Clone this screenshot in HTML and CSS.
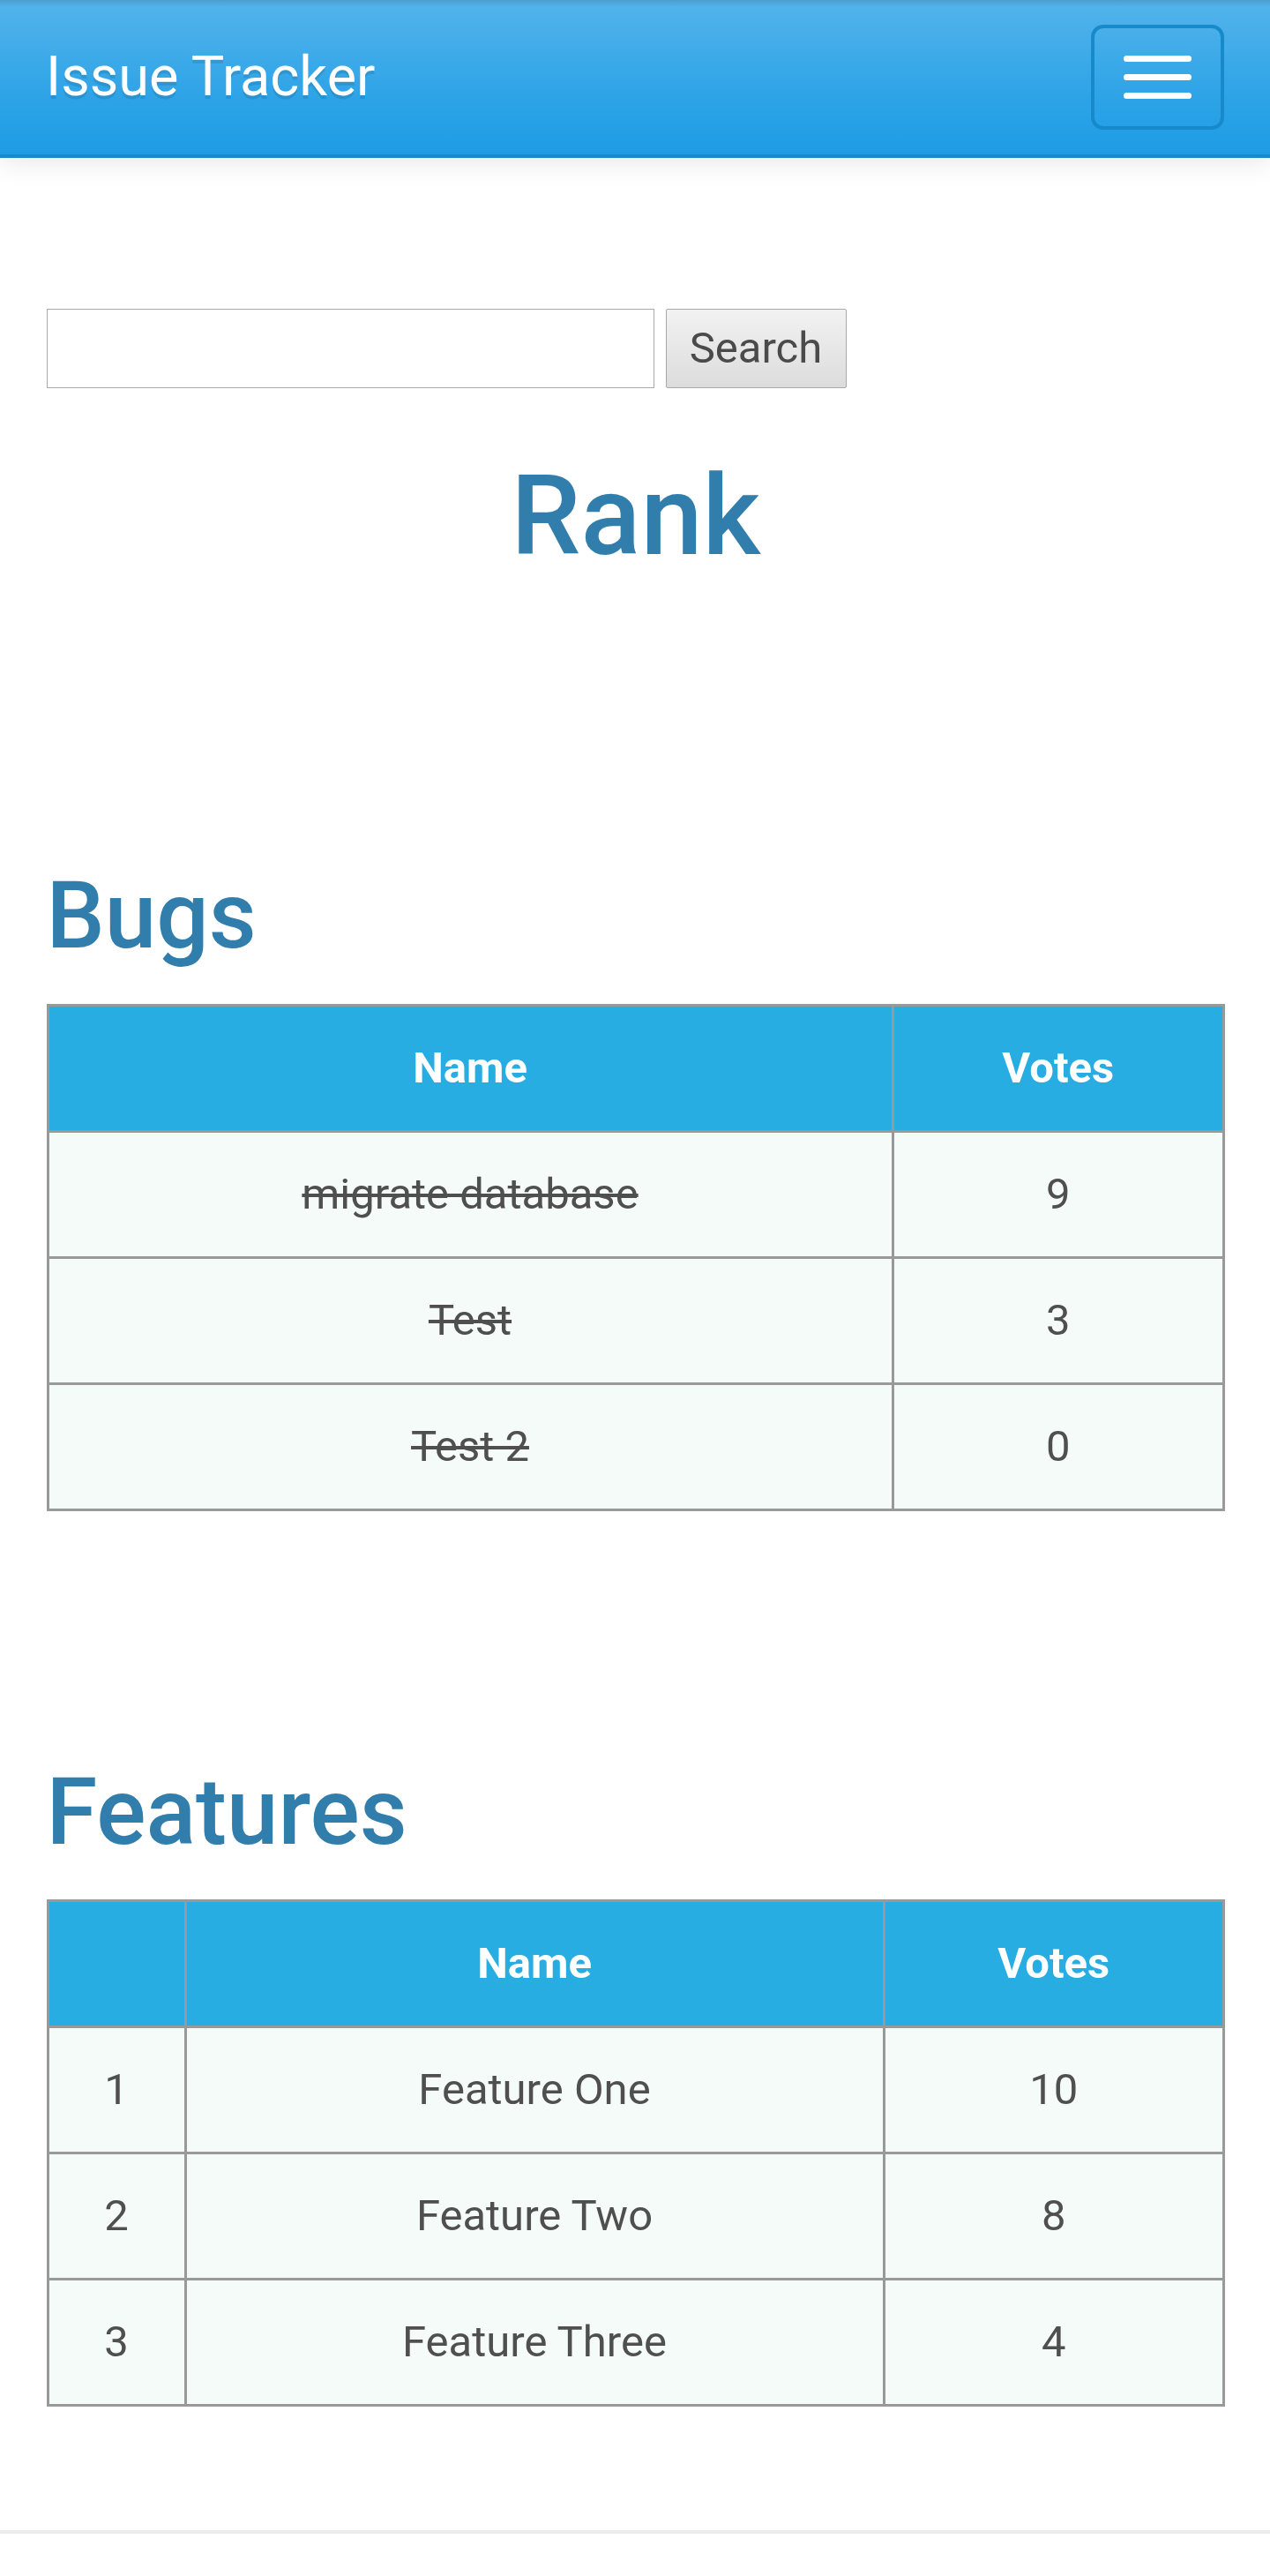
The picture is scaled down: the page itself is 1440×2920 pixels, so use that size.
FILE: index.html
```html
<!DOCTYPE html>
<html lang="en">
<head>
<meta charset="utf-8">
<title>Issue Tracker</title>
<link rel="stylesheet" href="styles.css">
</head>
<body>
<nav class="navbar">
  <a class="brand" href="#">Issue Tracker</a>
  <button class="toggle" type="button" aria-label="Toggle navigation">
    <span class="bar"></span>
    <span class="bar"></span>
    <span class="bar"></span>
  </button>
</nav>
<main class="container">
  <form class="search">
    <input class="search-input" type="text">
    <button class="search-btn" type="button">Search</button>
  </form>
  <h1 class="page-title">Rank</h1>

  <h2 class="section-title bugs-title">Bugs</h2>
  <table class="rank-table bugs-table">
    <colgroup><col class="c-bug-name"><col></colgroup>
    <thead>
      <tr><th>Name</th><th>Votes</th></tr>
    </thead>
    <tbody>
      <tr><td class="done">migrate database</td><td>9</td></tr>
      <tr><td class="done">Test</td><td>3</td></tr>
      <tr><td class="done">Test 2</td><td>0</td></tr>
    </tbody>
  </table>

  <h2 class="section-title features-title">Features</h2>
  <table class="rank-table features-table">
    <colgroup><col class="c-num"><col class="c-feat-name"><col></colgroup>
    <thead>
      <tr><th></th><th>Name</th><th>Votes</th></tr>
    </thead>
    <tbody>
      <tr><td>1</td><td>Feature One</td><td>10</td></tr>
      <tr><td>2</td><td>Feature Two</td><td>8</td></tr>
      <tr><td>3</td><td>Feature Three</td><td>4</td></tr>
    </tbody>
  </table>
</main>
<footer class="footer"></footer>
</body>
</html>
```

FILE: styles.css
```css
* { box-sizing: border-box; }

html, body {
  margin: 0;
  padding: 0;
  background: #fff;
}

body {
  font-family: Roboto, "Helvetica Neue", Helvetica, Arial, sans-serif;
  font-size: 49px;
  line-height: 70px;
  color: #555;
}

.navbar {
  position: relative;
  height: 179px;
  display: flex;
  align-items: flex-start;
  justify-content: space-between;
  background-image: linear-gradient(#54b4eb, #2fa4e7 60%, #1d9ce5);
  border-bottom: 4px solid #178acc;
  box-shadow: 0 4px 30px rgba(0, 0, 0, 0.1);
}

.navbar::before {
  content: "";
  position: absolute;
  left: 0;
  right: 0;
  top: 0;
  height: 8px;
  background: linear-gradient(rgba(0, 0, 0, 0.12), rgba(0, 0, 0, 0));
}

.brand {
  display: block;
  padding: 52px 0 0 52px;
  font-size: 63px;
  line-height: 70px;
  color: #fff;
  text-decoration: none;
  text-shadow: 0 4px 0 rgba(0, 0, 0, 0.1);
}

.toggle {
  margin: 28px 52px 0 0;
  width: 151px;
  height: 119px;
  padding: 0;
  border: 4px solid #178acc;
  border-radius: 14px;
  background: transparent;
  display: flex;
  flex-direction: column;
  align-items: center;
  justify-content: center;
  gap: 14px;
}

.bar {
  display: block;
  width: 77px;
  height: 7px;
  border-radius: 4px;
  background: #fff;
}

.container {
  padding: 0 51px 0 52.5px;
}

.search {
  margin: 171px 0 0 0;
  display: flex;
  align-items: stretch;
  gap: 13px;
  height: 90px;
}

.search-input {
  width: 689px;
  height: 90px;
  border: 1px solid #a9a9a9;
  border-radius: 0;
  background: #fff;
  margin: 0;
  font-family: inherit;
  font-size: 49px;
}

.search-btn {
  width: 205px;
  height: 90px;
  margin: 0;
  padding: 0;
  border: 1px solid #a9a9a9;
  border-radius: 2px;
  background-image: linear-gradient(#f2f2f2, #dcdcdc);
  color: #4a4a4a;
  font-family: inherit;
  font-size: 49px;
  line-height: 70px;
}

.page-title {
  margin: 75.6px 0 0 0;
  font-size: 126px;
  line-height: 138.6px;
  font-weight: 500;
  text-align: center;
  color: #317eac;
}

.section-title {
  margin: 0 0 41px 0;
  font-size: 105px;
  line-height: 115.5px;
  font-weight: 500;
  color: #317eac;
}

.bugs-title { margin-top: 327px; }
.features-title { margin-top: 284px; }

.rank-table {
  width: 100%;
  table-layout: fixed;
  border-collapse: collapse;
  border: 3px solid #999;
}

.rank-table th,
.rank-table td {
  border: 3px solid #999;
  padding: 35px 14px 35px 14px;
  height: 143px;
  text-align: center;
  vertical-align: middle;
  line-height: 70px;
  font-size: 49px;
}

.rank-table th {
  background: #28ade3;
  color: #fff;
  font-weight: 700;
}

.rank-table td {
  background: #f5fbf9;
  color: #4f4f4f;
}

.rank-table td.done {
  text-decoration: line-through;
}

.c-bug-name { width: 958px; }
.c-num { width: 156px; }
.c-feat-name { width: 792px; }

.footer {
  margin-top: 140px;
  border-top: 4px solid #ececec;
  height: 47px;
}
```
